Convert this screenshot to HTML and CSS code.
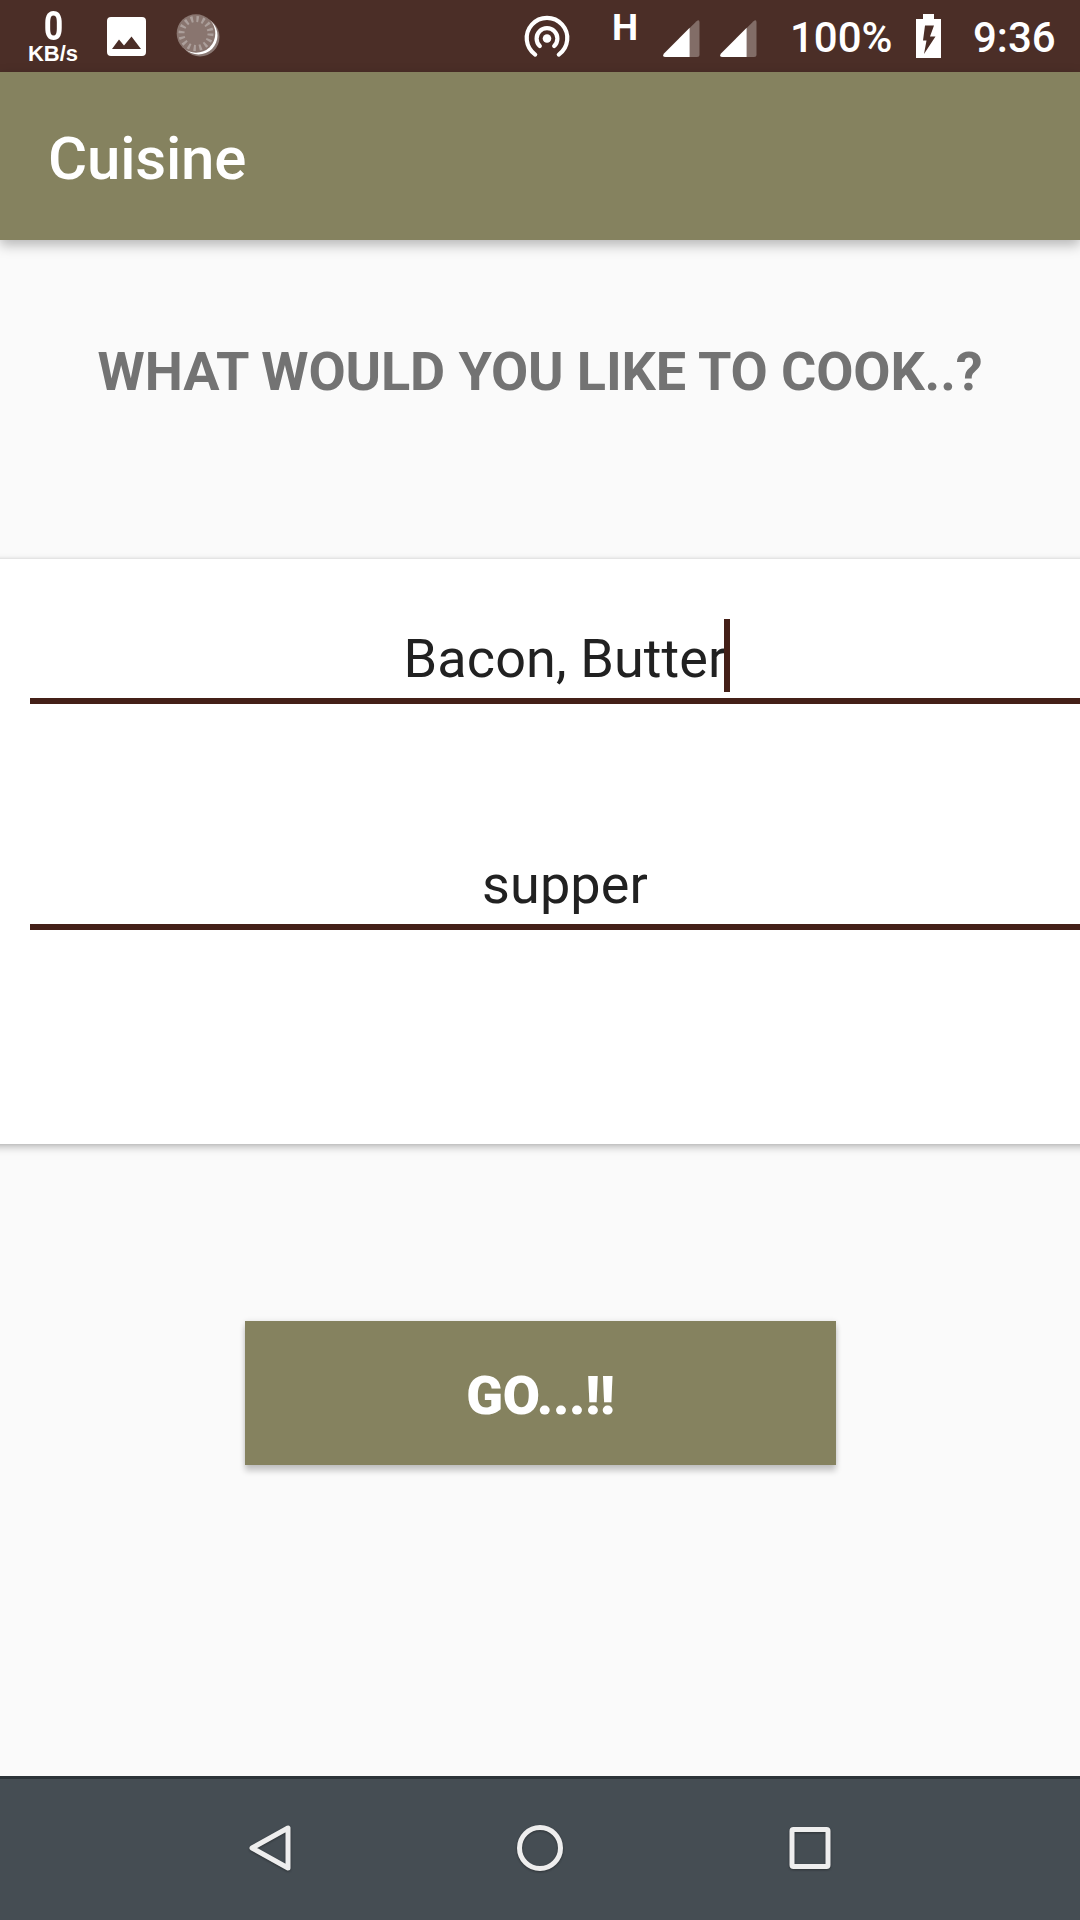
FILE: index.html
```html
<!DOCTYPE html>
<html lang="en">
<head>
<meta charset="utf-8">
<title>Cuisine</title>
<link rel="stylesheet" href="styles.css">
</head>
<body>
<div class="screen">
  <div class="status-bar">
    <div class="speed"><span class="speed-value">0</span><span class="speed-unit">KB/s</span></div>
    <svg class="photo-icon" viewBox="0 0 39 39"><path fill="#fff" fill-rule="evenodd" d="M4 0H35Q39 0 39 4V35Q39 39 35 39H4Q0 39 0 35V4Q0 0 4 0ZM5 32H34L24.500 19.500L17 28.500L12 22.500Z"/></svg>
    <svg class="sync-icon" viewBox="0 0 44 44">
      <circle cx="23" cy="23" r="19.500" fill="#fff" opacity=".35"/>
      <circle cx="21.500" cy="21.500" r="19" fill="#fff"/>
      <circle cx="19" cy="19.500" r="19.300" fill="#89756f"/>
      <circle cx="19" cy="19.500" r="14.500" fill="none" stroke="#ac9f9b" stroke-width="6" stroke-dasharray="2.300 3.394"/>
    </svg>
    <svg class="hotspot-icon" viewBox="0 0 46 42" fill="none" stroke="#fff" stroke-width="4.200" stroke-linecap="round">
      <circle cx="23" cy="22.500" r="4.300" fill="#fff" stroke="none"/>
      <path d="M15.800 30A10.400 10.400 0 1 1 30.200 30"/>
      <path d="M11.200 38.600A20.300 20.300 0 1 1 34.800 38.600"/>
    </svg>
    <span class="network">H</span>
    <svg class="signal-icon" viewBox="0 0 37 37"><path fill="#826d67" d="M26.700 8L33.500 1.200Q36.500-1 36.500 2.500V34.500Q36.500 37 34 37H26.700Z"/><path fill="#fff" d="M26.700 7.700V37H2.500Q-1.500 36.500 1 33.400Z"/></svg>
    <svg class="signal-icon signal-second" viewBox="0 0 37 37"><path fill="#826d67" d="M26.700 8L33.500 1.200Q36.500-1 36.500 2.500V34.500Q36.500 37 34 37H26.700Z"/><path fill="#fff" d="M26.700 7.700V37H2.500Q-1.500 36.500 1 33.400Z"/></svg>
    <span class="battery-level">100%</span>
    <svg class="battery-icon" viewBox="0 0 25 44"><path fill="#fff" fill-rule="evenodd" d="M7 0H18V5H25V44H0V5H7ZM9 11.500L7 26.500H10.500L8 40L19.500 22.500H14L18 11.500Z"/></svg>
    <span class="clock">9:36</span>
  </div>
  <header class="toolbar"><h1 class="title">Cuisine</h1></header>
  <main class="content">
    <h2 class="question">WHAT WOULD YOU LIKE TO COOK..?</h2>
    <section class="card">
      <div class="field"><span class="value">Bacon, Butter<i class="caret"></i></span></div>
      <div class="field"><span class="value">supper</span></div>
    </section>
    <button class="go">GO...!!</button>
  </main>
  <nav class="nav-bar">
    <svg class="nav-icon" viewBox="0 0 48 48"><path d="M42 4V44L6 24Z"/></svg>
    <svg class="nav-icon" viewBox="0 0 48 48"><circle cx="24" cy="24" r="20.500"/></svg>
    <svg class="nav-icon" viewBox="0 0 48 48"><rect x="6" y="5.500" width="36" height="37" rx="1.500"/></svg>
  </nav>
</div>
</body>
</html>
```
FILE: styles.css
```css
* { box-sizing: border-box; }
body { margin: 0; font-family: Roboto, sans-serif; background: #fafafa; }
h1, h2 { margin: 0; }
svg { display: block; flex: none; overflow: visible; }

.screen { width: 1080px; height: 1920px; display: flex; flex-direction: column; overflow: hidden; }

.status-bar { flex: none; height: 72px; display: flex; align-items: flex-start; padding-left: 26px; background: #4b2e27; color: #fff; }
.speed { width: 54px; padding-top: 10px; display: flex; flex-direction: column; align-items: center; font-weight: 700; white-space: nowrap; }
.speed-value { font-size: 34px; line-height: 32px; font-weight: 700; transform: scaleY(1.2); padding-left: 1px; }
.speed-unit { font: 700 22px/24px "Liberation Sans", sans-serif; }
.photo-icon { width: 39px; height: 39px; margin: 16.500px 0 0 26.500px; }
.sync-icon { width: 44px; height: 44px; margin: 14px 0 0 31.500px; }
.hotspot-icon { width: 46px; height: 42px; margin: 15.500px 0 0 303px; }
.network { width: 29px; margin: 8px 0 0 42px; font-size: 37px; line-height: 40px; font-weight: 700; }
.signal-icon { width: 37px; height: 37px; margin: 20px 0 0 22px; }
.signal-second { margin-left: 20px; }
.battery-level, .clock { font-size: 42px; line-height: 50px; font-weight: 500; margin-top: 13px; white-space: nowrap; }
.battery-level { width: 104px; margin-left: 33px; }
.battery-icon { width: 25px; height: 44px; margin: 14px 0 0 22px; }
.clock { margin-left: 32px; }

.toolbar { position: relative; flex: none; height: 168px; padding: 0 48px; display: flex; align-items: center; background: #85825f; color: #fff; box-shadow: 0 5px 12px rgba(0, 0, 0, .28); }
.title { font-size: 60px; line-height: 70px; font-weight: 500; padding-top: 5px; letter-spacing: -.2px; }

.content { flex: 1; display: flex; flex-direction: column; align-items: center; }
.question { margin-top: 97px; font-size: 54px; line-height: 70px; font-weight: 700; color: #737373; white-space: nowrap; letter-spacing: -.12px; }
.card { flex: none; width: 1120px; height: 585px; margin-top: 152px; padding: 60px 0 0 50px; background: #fff; box-shadow: 0 3px 8px rgba(0, 0, 0, .26), 0 0 3px rgba(0, 0, 0, .1); }
.field { width: 1070px; height: 85px; margin-bottom: 141px; border-bottom: 6px solid #442018; text-align: center; }
.value { position: relative; display: inline-block; font-size: 54px; line-height: 79px; color: #212121; letter-spacing: .1px; }
.caret { position: absolute; right: -4px; top: 0; width: 6px; height: 73px; background: #442018; }
.go { width: 591px; height: 144px; margin-top: 177px; padding: 5px 0 0 1px; border: 0; background: #85825f; color: #fff; font: 900 54px/70px Roboto, sans-serif; letter-spacing: -.15px; box-shadow: 0 6px 6px rgba(0, 0, 0, .2), 0 0 5px rgba(0, 0, 0, .1); }

.nav-bar { flex: none; height: 144px; padding-bottom: 3px; border-top: 3px solid #2c3338; background: #454d53; display: flex; align-items: center; justify-content: center; gap: 222px; }
.nav-icon { width: 48px; height: 48px; fill: none; stroke: #eee; stroke-width: 5; stroke-linejoin: round; filter: drop-shadow(0 1px 1px rgba(0, 0, 0, .35)); }
```
